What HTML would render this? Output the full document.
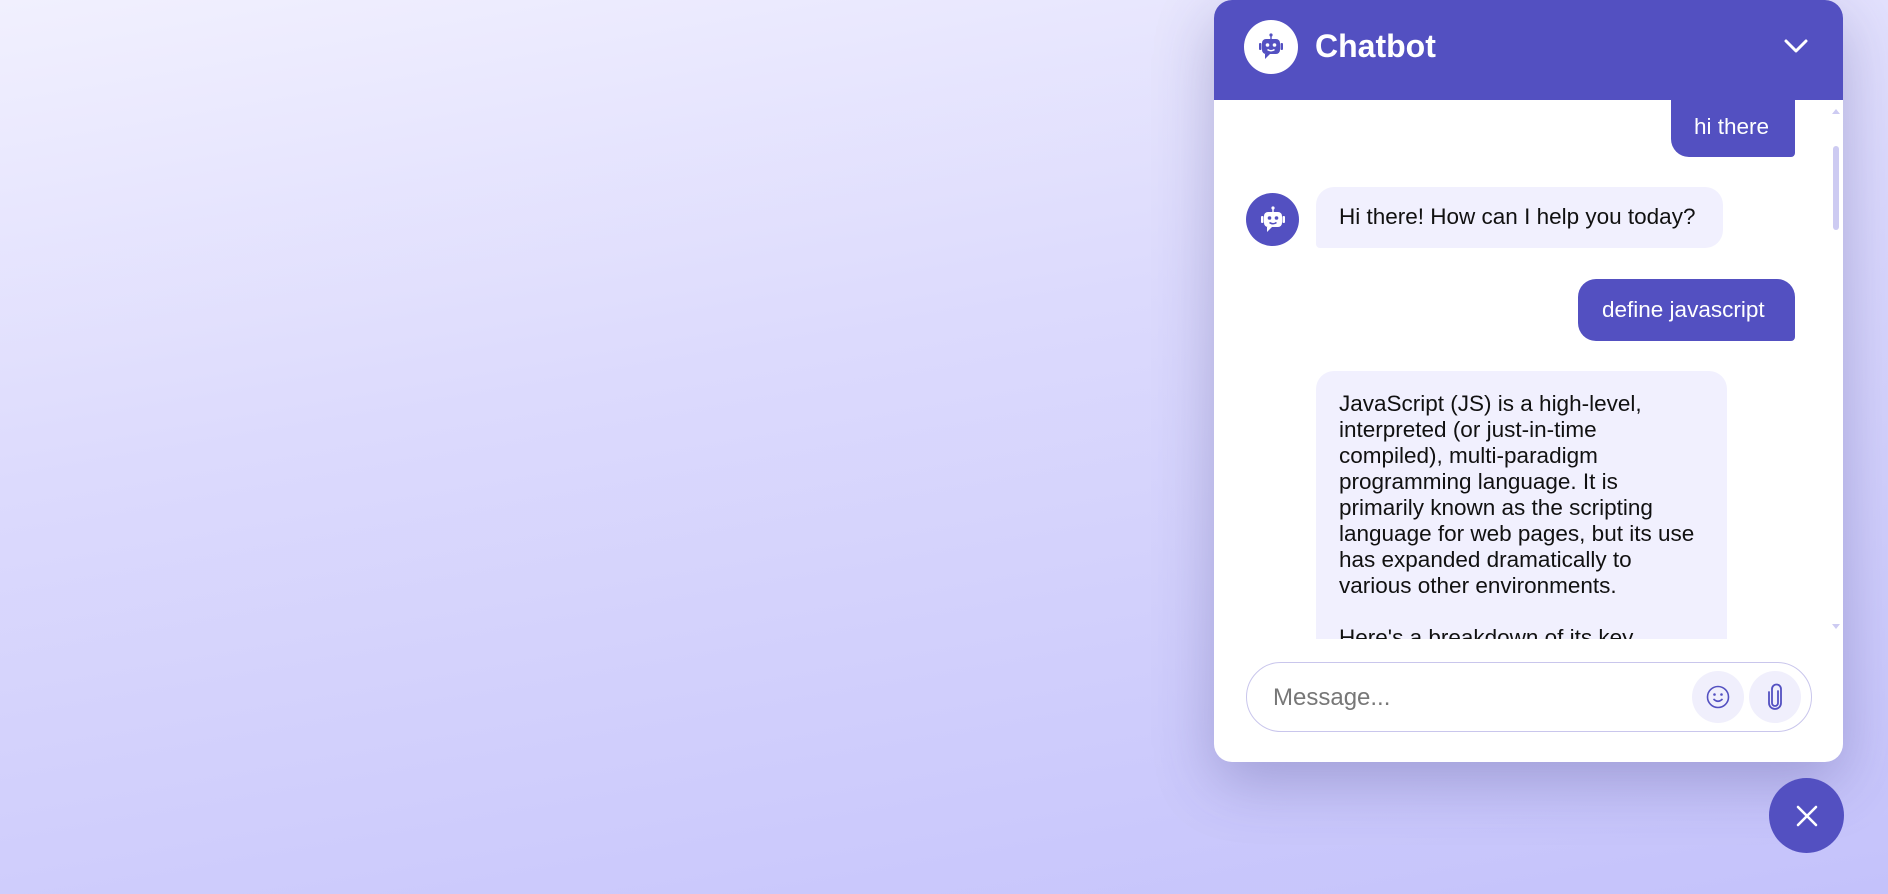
<!DOCTYPE html>
<html><head><meta charset="utf-8"><style>
*{box-sizing:border-box;margin:0;padding:0}
html,body{width:1888px;height:894px;overflow:hidden}
body{background:linear-gradient(170deg,#f1f0fe 0%,#dcdafd 40%,#c4c2fb 100%);font-family:"Liberation Sans",sans-serif;position:relative}
.panel{position:absolute;left:1214px;top:0;width:629px;height:762px;background:#fff;border-radius:18px;overflow:hidden;box-shadow:0 20px 60px rgba(60,55,130,0.3)}
.hdr{position:absolute;left:0;top:0;width:629px;height:100px;background:#5350c1}
.av{position:absolute;border-radius:50%;display:flex;align-items:center;justify-content:center}
.title{position:absolute;left:101px;top:28px;color:#fff;font-size:32px;font-weight:bold}
.bub{position:absolute;font-size:22.5px;line-height:26px}
.u{background:#5350c1;color:#fff;border-radius:18px 18px 4px 18px}
.b{background:#f1f0fe;color:#111;border-radius:18px 18px 18px 4px}
.inp{position:absolute;left:32px;top:662px;width:566px;height:70px;border:1px solid #c9c6ec;border-radius:35px}
.btn{position:absolute;width:52px;height:52px;border-radius:50%;background:#f0effc;display:flex;align-items:center;justify-content:center;top:8px}
</style></head><body>
<div class="panel">
 <div class="hdr">
  <div class="av" style="left:30px;top:20px;width:54px;height:54px;background:#fff">
   <svg width="32" height="32" viewBox="0 0 32 32"><circle cx="16" cy="4" r="1.6" fill="#5350c1"/><rect x="15.3" y="4" width="1.4" height="4" fill="#5350c1"/><rect x="7" y="8" width="18" height="15" rx="4" fill="#5350c1"/><rect x="4" y="12" width="2.5" height="7" rx="1" fill="#5350c1"/><rect x="25.5" y="12" width="2.5" height="7" rx="1" fill="#5350c1"/><path d="M10 23 L10 28 L15 23Z" fill="#5350c1"/><circle cx="12.5" cy="14" r="1.8" fill="#fff"/><circle cx="19.5" cy="14" r="1.8" fill="#fff"/><path d="M12.5 18.5 Q16 21 19.5 18.5" stroke="#fff" stroke-width="1.5" fill="none"/></svg>
  </div>
  <div class="title">Chatbot</div>
  <svg style="position:absolute;left:569px;top:37px" width="26" height="18" viewBox="0 0 26 18"><path d="M3 4 L13 14 L23 4" stroke="#fff" stroke-width="3" fill="none" stroke-linecap="round" stroke-linejoin="round"/></svg>
 </div>
 <div class="bub u" style="left:457px;top:100px;width:124px;height:57px;padding:14px 0 0 23px;border-radius:0 0 4px 18px">hi there</div>
 <div class="av" style="left:32px;top:193px;width:53px;height:53px;background:#5350c1">
  <svg width="32" height="32" viewBox="0 0 32 32"><circle cx="16" cy="4" r="1.6" fill="#fff"/><rect x="15.3" y="4" width="1.4" height="4" fill="#fff"/><rect x="7" y="8" width="18" height="15" rx="4" fill="#fff"/><rect x="4" y="12" width="2.5" height="7" rx="1" fill="#fff"/><rect x="25.5" y="12" width="2.5" height="7" rx="1" fill="#fff"/><path d="M10 23 L10 28 L15 23Z" fill="#fff"/><circle cx="12.5" cy="14" r="1.8" fill="#5350c1"/><circle cx="19.5" cy="14" r="1.8" fill="#5350c1"/><path d="M12.5 18.5 Q16 21 19.5 18.5" stroke="#5350c1" stroke-width="1.5" fill="none"/></svg>
 </div>
 <div class="bub b" style="left:102px;top:187px;width:407px;height:61px;padding:17px 0 0 23px">Hi there! How can I help you today?</div>
 <div class="bub u" style="left:364px;top:279px;width:217px;height:62px;padding:18px 0 0 24px">define javascript</div>
 <div style="position:absolute;left:102px;top:371px;width:411px;height:268px;overflow:hidden">
  <div class="bub b" style="left:0;top:0;width:411px;height:400px;padding:20px 0 0 23px">JavaScript (JS) is a high-level,<br>interpreted (or just-in-time<br>compiled), multi-paradigm<br>programming language. It is<br>primarily known as the scripting<br>language for web pages, but its use<br>has expanded dramatically to<br>various other environments.<br><br>Here's a breakdown of its key</div>
 </div>
 <svg style="position:absolute;left:617px;top:108px" width="10" height="8"><path d="M1 6 L5 1 L9 6Z" fill="#cdcbf2"/></svg>
 <div style="position:absolute;left:619px;top:146px;width:6px;height:84px;border-radius:3px;background:#cdcbf2"></div>
 <svg style="position:absolute;left:617px;top:622px" width="10" height="8"><path d="M1 2 L5 7 L9 2Z" fill="#cdcbf2"/></svg>
 <div class="inp">
  <div style="position:absolute;left:26px;top:21px;font-size:24px;color:#777">Message...</div>
  <div class="btn" style="left:445px"><svg width="26" height="26" viewBox="0 0 26 26"><circle cx="13" cy="13" r="10.5" stroke="#5350c1" stroke-width="1.6" fill="none"/><circle cx="9.5" cy="10.5" r="1.3" fill="#5350c1"/><circle cx="16.5" cy="10.5" r="1.3" fill="#5350c1"/><path d="M8.5 15 Q13 19.5 17.5 15" stroke="#5350c1" stroke-width="1.6" fill="none"/></svg></div>
  <div class="btn" style="left:502px"><svg width="22" height="28" viewBox="0 0 22 28"><path d="M14 8 V20 A3 3 0 0 1 8 20 V6 A4.5 4.5 0 0 1 17 6 V20 A6 6 0 0 1 5 20 V9" stroke="#5350c1" stroke-width="1.8" fill="none" stroke-linecap="round"/></svg></div>
 </div>
</div>
<div class="av" style="left:1769px;top:778px;width:75px;height:75px;background:#5350c1">
 <svg width="26" height="26" viewBox="0 0 26 26"><path d="M4 4 L22 22 M22 4 L4 22" stroke="#fff" stroke-width="2.6" stroke-linecap="round"/></svg>
</div>
</body></html>
